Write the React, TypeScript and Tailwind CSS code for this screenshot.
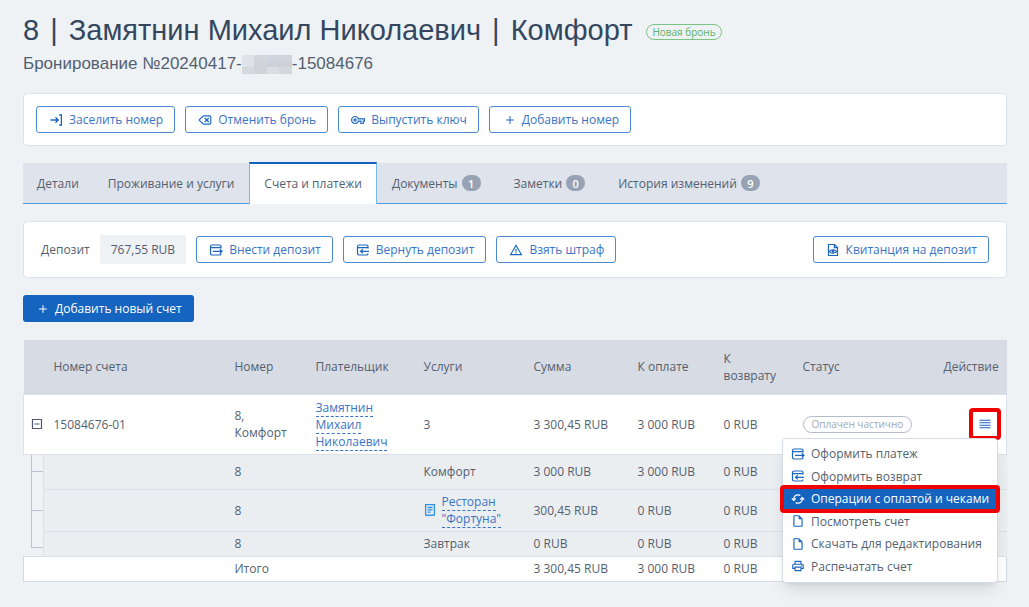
import type { ReactNode } from 'react';
import { Plus, Delete } from 'lucide-react';
import { MdOutlineVpnKey, MdOutlineInsertDriveFile, MdOutlinePrint, MdWarningAmber } from 'react-icons/md';

const tabs = [
  { label: 'Детали' },
  { label: 'Проживание и услуги' },
  { label: 'Счета и платежи', active: true },
  { label: 'Документы', count: 1 },
  { label: 'Заметки', count: 0 },
  { label: 'История изменений', count: 9 },
];

const services = [
  { name: 'Комфорт', room: '8', sum: '3 000 RUB', due: '3 000 RUB', refund: '0 RUB', height: 'h-[35px]' },
  { name: 'Ресторан "Фортуна"', link: true, room: '8', sum: '300,45 RUB', due: '0 RUB', refund: '0 RUB', height: 'h-[42px]' },
  { name: 'Завтрак', room: '8', sum: '0 RUB', due: '0 RUB', refund: '0 RUB', height: 'h-[25px]' },
];

function EnterIcon() {
  return (
    <svg viewBox="0 0 14 14" className="size-3.5" fill="none" stroke="currentColor" strokeWidth="1.3">
      <path d="M1.5 7h7.5M6.5 4.300l2.700 2.700-2.700 2.700M10.200 2h2.200v10h-2.200" />
    </svg>
  );
}

function CardInIcon() {
  return (
    <svg viewBox="0 0 14 14" className="size-3.5" fill="none" stroke="currentColor" strokeWidth="1.2">
      <path d="M12 5.5V3.4c0-.9-.5-1.4-1.4-1.4H3C2 2 1.5 2.5 1.5 3.4v7.2c0 .9.5 1.4 1.5 1.4h7.6c.9 0 1.4-.5 1.4-1.4M1.5 4.7H12M4 8.3h8.5M10.8 6.2 13 8.3l-2.2 2.1" />
    </svg>
  );
}

function CardOutIcon() {
  return (
    <svg viewBox="0 0 14 14" className="size-3.5" fill="none" stroke="currentColor" strokeWidth="1.2">
      <path d="M12 5.5V3.4c0-.9-.5-1.4-1.4-1.4H3C2 2 1.5 2.5 1.5 3.4v7.2c0 .9.5 1.4 1.5 1.4h7.6c.9 0 1.4-.5 1.4-1.4M1.5 4.7H12M4.5 8.3H13M6.8 6.2 4.6 8.3l2.2 2.1" />
    </svg>
  );
}

function ReceiptIcon() {
  return (
    <svg viewBox="0 0 14 14" className="size-3.5" fill="none" stroke="currentColor" strokeWidth="1.2">
      <path d="M2.5 1.5h6l3 3v8h-9zM8.3 1.5v3.2h3.2" />
      <path d="M3.3 8.5c1.5-2.3 5.900-2.300 7.400 0-1.500 2.300-5.900 2.300-7.400 0z" />
      <circle cx="7" cy="8.5" r=".8" fill="currentColor" />
    </svg>
  );
}

function SyncIcon() {
  return (
    <svg viewBox="0 0 14 14" className="size-3.5" fill="none" stroke="currentColor" strokeWidth="1.3">
      <path d="M2.8 8.2V7c0-2.4 1.8-4.2 4.2-4.2.9 0 1.7.2 2.3.7M11.2 5.8V7c0 2.4-1.8 4.2-4.2 4.2-.9 0-1.7-.2-2.3-.7" />
      <path d="M.8 6.4l2 2 2-2M9.2 7.6l2-2 2 2" />
    </svg>
  );
}

function BillIcon() {
  return (
    <svg viewBox="0 0 12 14" className="h-3.5 w-3 shrink-0 text-[#2f8fe6]" fill="none" stroke="currentColor" strokeWidth="1.3">
      <path d="M1.6 1.6h8.8v10.3l-1.1.7-1.1-.7-1.1.7-1.1-.7-1.1.7-1.1-.7-1.1.7-1.1-.7zM3.5 4.5h5M3.5 6.8h5M3.5 9.1h3" />
    </svg>
  );
}

function LinesIcon() {
  return (
    <svg viewBox="0 0 12 10" className="h-2.5 w-3" fill="none" stroke="currentColor" strokeWidth="1.1">
      <path d="M.5 1.3h11M.5 3.8h11M.5 6.3h11M.5 8.8h11" />
    </svg>
  );
}

function CollapseIcon() {
  return (
    <svg viewBox="0 0 12 12" className="size-3" fill="none" stroke="#4a5a75" strokeWidth="1.2">
      <path d="M1.5 1.5h9v9h-9zM3.5 6h5" />
    </svg>
  );
}

const menu = [
  { label: 'Оформить платеж', icon: <CardInIcon /> },
  { label: 'Оформить возврат', icon: <CardOutIcon /> },
  { label: 'Операции с оплатой и чеками', icon: <SyncIcon />, active: true },
  { label: 'Посмотреть счет', icon: <MdOutlineInsertDriveFile className="size-3.5" /> },
  { label: 'Скачать для редактирования', icon: <MdOutlineInsertDriveFile className="size-3.5" /> },
  { label: 'Распечатать счет', icon: <MdOutlinePrint className="size-3.5" /> },
];

function OutlineButton({ icon, children }: { icon: ReactNode; children: ReactNode }) {
  return (
    <button
      type="button"
      className="flex h-[27px] items-center gap-1.5 whitespace-nowrap rounded-[3px] border border-[#4a8ad4] bg-white pl-3 pr-[11px] text-[#3a74c4]"
    >
      <span className="text-[#1c66c0]">{icon}</span>
      {children}
    </button>
  );
}

function Tree({ last }: { last: boolean }) {
  return (
    <td className="h-px p-0">
      <div className="flex h-full flex-col pl-[7px]">
        <div className={last ? 'h-[17px] border-b border-l border-[#b9c2d2]' : 'flex-1 border-b border-l border-[#b9c2d2]'} />
        {!last && <div className="flex-1 border-l border-[#b9c2d2]" />}
      </div>
    </td>
  );
}

export default function App() {
  return (
    <div className="min-h-screen bg-[#eef2f5] px-[22px] pl-[23px] pt-3 font-['Open_Sans','Noto_Sans',sans-serif] text-xs leading-[17px] text-[#545f70]">
      <header className="font-['Liberation_Sans',sans-serif]">
        <div className="flex items-center gap-3.5">
          <h1 className="whitespace-nowrap text-[29px] leading-9 text-[#34475f]">
            8 <span className="mx-[3px]">|</span> Замятнин Михаил Николаевич <span className="mx-[3px]">|</span> Комфорт
          </h1>
          <span className="mt-1 rounded-full border border-[#7cc386] px-[5px] font-['Open_Sans',sans-serif] text-[10px] leading-[14px] text-[#5cb068]">
            Новая бронь
          </span>
        </div>
        <div className="flex items-center pt-1.5 text-[17px] leading-5">
          <span>Бронирование №20240417-</span>
          <span className="grid h-[19px] w-[50px] grid-cols-4 grid-rows-3">
            <i className="bg-[#dfe3e7]" /><i className="bg-[#d3d6db]" /><i className="bg-[#cfd4de]" /><i className="bg-[#d0d3d9]" />
            <i className="bg-[#dfe2e6]" /><i className="bg-[#cfd2d8]" /><i className="bg-[#cdd1da]" /><i className="bg-[#ced2d8]" />
            <i className="bg-[#d5d8dd]" /><i className="bg-[#d0d3d8]" /><i className="bg-[#dadde2]" /><i className="bg-[#d3d6dc]" />
          </span>
          <span>-15084676</span>
        </div>
      </header>

      {/* Booking actions */}
      <div className="mt-[19px] flex gap-2.5 rounded border border-[#dde2ea] bg-white p-3">
        <OutlineButton icon={<EnterIcon />}>Заселить номер</OutlineButton>
        <OutlineButton icon={<Delete className="size-3.5" />}>Отменить бронь</OutlineButton>
        <OutlineButton icon={<MdOutlineVpnKey className="size-3.5" />}>Выпустить ключ</OutlineButton>
        <OutlineButton icon={<Plus className="ml-0.5 size-3" />}>Добавить номер</OutlineButton>
      </div>

      <nav className="mt-[17px] flex h-[41px] gap-px border-b border-[#4f9fe0] bg-[#dfe3eb]">
        {tabs.map((tab) => (
          <button
            key={tab.label}
            type="button"
            className={
              tab.active
                ? '-mb-px -mt-px flex items-center border-x border-t-2 border-x-[#7db8ea] border-t-[#1260bd] bg-white px-3.5 pb-0.5'
                : 'flex items-center gap-1 px-3.5'
            }
          >
            {tab.label}
            {tab.count !== undefined && (
              <span className="mr-1 flex h-4 w-[19px] items-center justify-center rounded-full bg-[#97a3b4] text-[11px] font-semibold text-white">
                {tab.count}
              </span>
            )}
          </button>
        ))}
      </nav>

      {/* Deposit */}
      <div className="mt-[17px] flex items-center gap-2.5 rounded border border-[#dde2ea] bg-white px-[17px] py-[13px]">
        <span>Депозит</span>
        <span className="bg-[#eef2f5] px-[11px] py-1.5">767,55 RUB</span>
        <OutlineButton icon={<CardInIcon />}>Внести депозит</OutlineButton>
        <OutlineButton icon={<CardOutIcon />}>Вернуть депозит</OutlineButton>
        <OutlineButton icon={<MdWarningAmber className="size-3.5" />}>Взять штраф</OutlineButton>
        <div className="ml-auto">
          <OutlineButton icon={<ReceiptIcon />}>Квитанция на депозит</OutlineButton>
        </div>
      </div>

      <button
        type="button"
        className="mt-[17px] flex h-[27px] items-center gap-1.5 rounded-[3px] bg-[#1464c0] px-3 text-white"
      >
        <Plus className="ml-0.5 size-3" />
        Добавить новый счет
      </button>

      <table className="mt-[18px] w-full table-fixed border-collapse text-left">
        <colgroup>
          <col className="w-5" />
          <col className="w-[181px]" />
          <col className="w-[81px]" />
          <col className="w-[108px]" />
          <col className="w-[110px]" />
          <col className="w-[104px]" />
          <col className="w-[86px]" />
          <col className="w-[79px]" />
          <col />
          <col className="w-[73px]" />
        </colgroup>
        <thead>
          <tr className="h-[54px] bg-[#d7dbe3] [&>th]:px-2.5 [&>th]:font-normal">
            <td />
            <th>Номер счета</th>
            <th>Номер</th>
            <th>Плательщик</th>
            <th>Услуги</th>
            <th>Сумма</th>
            <th>К оплате</th>
            <th>К возврату</th>
            <th>Статус</th>
            <th>Действие</th>
          </tr>
        </thead>
        <tbody>
          <tr className="h-[60px] border border-[#dde2ea] bg-white [&>td]:px-2.5">
            <td>
              <button type="button" aria-label="Свернуть" className="-ml-[3px] block">
                <CollapseIcon />
              </button>
            </td>
            <td>15084676-01</td>
            <td>8, Комфорт</td>
            <td>
              <a href="#payer" className="border-b border-dashed border-[#3a74c4] text-[#3a74c4]">
                Замятнин Михаил Николаевич
              </a>
            </td>
            <td>3</td>
            <td>3 300,45 RUB</td>
            <td>3 000 RUB</td>
            <td>0 RUB</td>
            <td>
              <span className="inline-block whitespace-nowrap rounded-full border border-[#b3bac8] px-2 text-[10px] leading-[15px] text-[#a0a8b8]">
                Оплачен частично
              </span>
            </td>
            <td className="relative">
              <button
                type="button"
                aria-label="Действия"
                className="-mr-[5px] ml-auto flex size-8 items-center justify-center rounded-sm border-4 border-[#f00000] text-[#1c66c0]"
              >
                <LinesIcon />
              </button>
              <div className="absolute right-2 top-[43px] z-10 grid h-[145px] w-[216px] grid-rows-6 rounded border border-[#d5dbe4] bg-white py-1 shadow-lg">
                {menu.map((item) => (
                  <button
                    key={item.label}
                    type="button"
                    className={
                      item.active
                        ? 'relative flex items-center gap-1.5 whitespace-nowrap bg-[#1464c0] pl-2 text-white'
                        : 'flex items-center gap-1.5 whitespace-nowrap pl-2'
                    }
                  >
                    <span className={item.active ? '' : 'text-[#1c66c0]'}>{item.icon}</span>
                    {item.label}
                    {item.active && (
                      <span className="absolute -inset-x-[3px] -inset-y-[3px] rounded-sm border-4 border-[#f00000]" />
                    )}
                  </button>
                ))}
              </div>
            </td>
          </tr>
          {services.map((row, idx) => (
            <tr key={row.name} className={row.height}>
              <Tree last={idx === services.length - 1} />
              <td className="border-y border-l border-[#dce1e7] bg-[#eaeef1]" />
              <td className="border-y border-[#dce1e7] bg-[#eaeef1] px-2.5">{row.room}</td>
              <td className="border-y border-[#dce1e7] bg-[#eaeef1]" />
              <td className="border-y border-[#dce1e7] bg-[#eaeef1] px-2.5">
                {row.link ? (
                  <div className="flex items-center gap-1.5">
                    <BillIcon />
                    <span>
                      <a href="#service" className="border-b border-dashed border-[#3a74c4] text-[#3a74c4]">
                        {row.name}
                      </a>
                    </span>
                  </div>
                ) : (
                  row.name
                )}
              </td>
              <td className="border-y border-[#dce1e7] bg-[#eaeef1] px-2.5">{row.sum}</td>
              <td className="border-y border-[#dce1e7] bg-[#eaeef1] px-2.5">{row.due}</td>
              <td className="border-y border-[#dce1e7] bg-[#eaeef1] px-2.5">{row.refund}</td>
              <td className="border-y border-[#dce1e7] bg-[#eaeef1]" colSpan={2} />
            </tr>
          ))}
          <tr className="h-[25px] border border-[#d5dbe4] bg-white [&>td]:px-2.5">
            <td colSpan={2} />
            <td>Итого</td>
            <td colSpan={2} />
            <td>3 300,45 RUB</td>
            <td>3 000 RUB</td>
            <td>0 RUB</td>
            <td colSpan={2} />
          </tr>
        </tbody>
      </table>
    </div>
  );
}
